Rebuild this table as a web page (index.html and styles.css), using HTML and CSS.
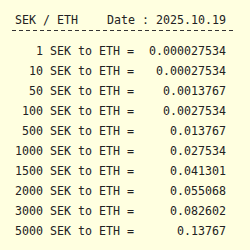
FILE: index.html
```html
<!DOCTYPE html>
<html>
<head>
<meta charset="utf-8">
<link rel="stylesheet" href="styles.css">
</head>
<body>
<div class="wrap">
  <div class="head"><span>SEK / ETH</span><span>Date : 2025.10.19</span></div>
  <div class="rule"></div>
  <div class="rows">
    <div class="row"><span class="lbl">1 SEK to ETH =</span><span class="val">0.000027534</span></div>
    <div class="row"><span class="lbl">10 SEK to ETH =</span><span class="val">0.00027534</span></div>
    <div class="row"><span class="lbl">50 SEK to ETH =</span><span class="val">0.0013767</span></div>
    <div class="row"><span class="lbl">100 SEK to ETH =</span><span class="val">0.0027534</span></div>
    <div class="row"><span class="lbl">500 SEK to ETH =</span><span class="val">0.013767</span></div>
    <div class="row"><span class="lbl">1000 SEK to ETH =</span><span class="val">0.027534</span></div>
    <div class="row"><span class="lbl">1500 SEK to ETH =</span><span class="val">0.041301</span></div>
    <div class="row"><span class="lbl">2000 SEK to ETH =</span><span class="val">0.055068</span></div>
    <div class="row"><span class="lbl">3000 SEK to ETH =</span><span class="val">0.082602</span></div>
    <div class="row"><span class="lbl">5000 SEK to ETH =</span><span class="val">0.13767</span></div>
  </div>
</div>
</body>
</html>
```
FILE: styles.css
```css
html, body {
  margin: 0;
  padding: 0;
  background: #ffffe0;
}
body {
  width: 250px;
  height: 250px;
  font-family: "DejaVu Sans Mono", monospace;
  font-size: 11.63px;
  color: #222;
}
.wrap {
  padding: 13px 0 0 0;
}
.head {
  display: flex;
  justify-content: space-between;
  width: 211px;
  margin-left: 15px;
  line-height: 14px;
  white-space: pre;
}
.rule {
  margin: 3px 0 0 12px;
  width: 221px;
  height: 1px;
  background: repeating-linear-gradient(to right, #333 0 4px, transparent 4px 7px);
}
.rows {
  margin-top: 10px;
}
.row {
  display: flex;
  margin-left: 15px;
  line-height: 20px;
  white-space: pre;
}
.lbl {
  width: 119px;
  text-align: right;
}
.val {
  width: 92px;
  text-align: right;
}
```
